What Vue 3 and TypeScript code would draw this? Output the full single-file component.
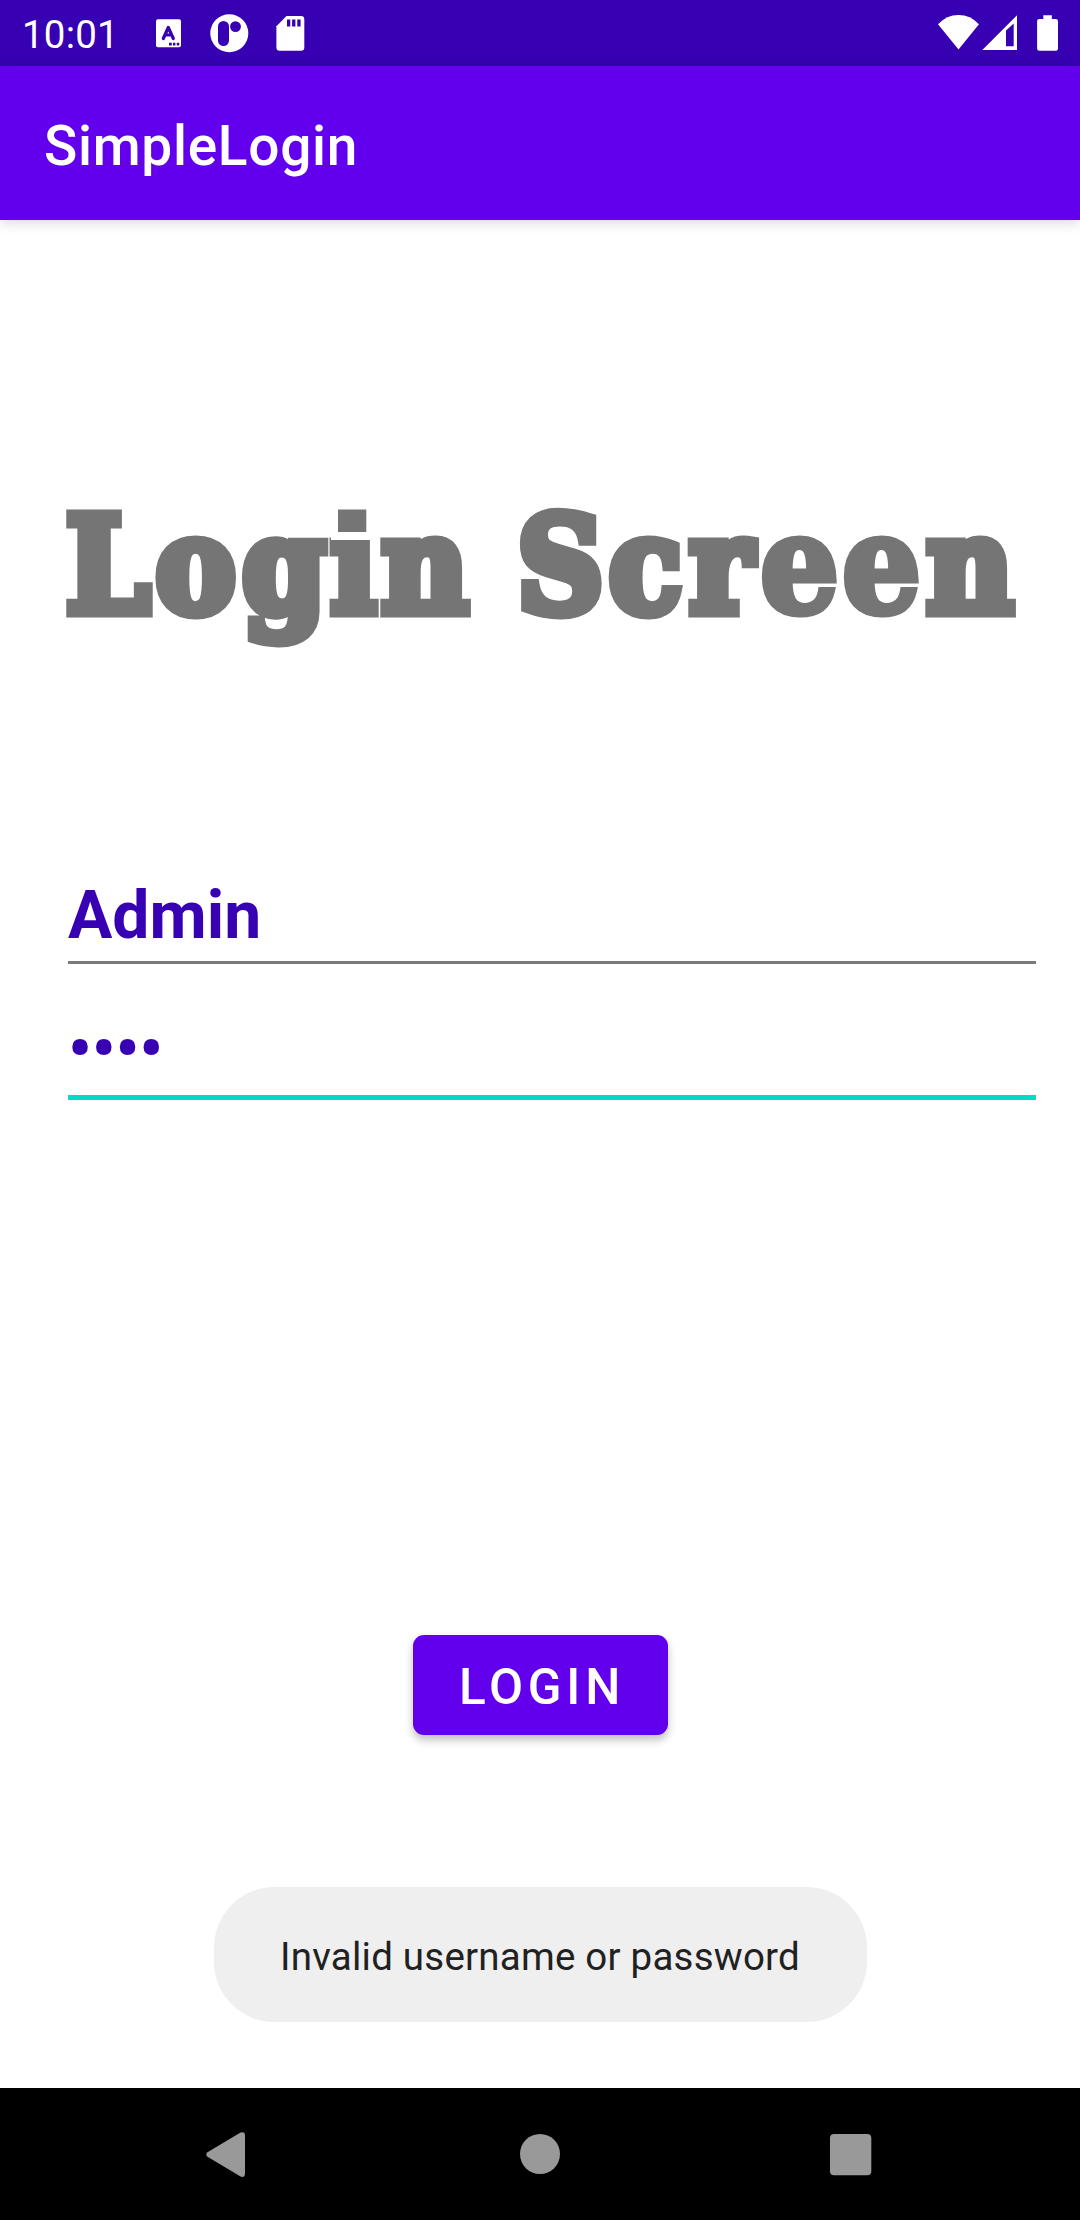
<script setup lang="ts">
import { ref } from 'vue'

const username = ref<string>('Admin')
const password = ref<string>('••••')
const message = ref<string>('Invalid username or password')

// Horizontal centre of each heading glyph
const glyphCentres: string = [108, 195.5, 284, 353.5, 425, 490, 560.5, 645.5, 721, 799.5, 881.5, 970].join(' ')
</script>

<template>
  <div class="screen">
    <header class="status">
      <span class="time">10:01</span>
      <svg class="notifications" width="180" height="66" viewBox="140 0 180 66" fill="#fff">
        <rect x="156" y="19.3" width="25" height="28" rx="2" />
        <path d="M163.300 38.500 168.300 27.500 173.300 38.500M165.200 35H171.500" fill="none" stroke="#3700b3" stroke-width="3.200" stroke-linecap="round" stroke-linejoin="round" />
        <path d="M169 42.7h2.8v2.8H169zM173 42.7h2.4v2.8H173zM176.8 42.7h2.4v2.8h-2.4z" fill="#3700b3" />
        <circle cx="229.3" cy="33.2" r="19" />
        <rect x="218" y="21" width="11" height="25" rx="5.5" fill="#3700b3" />
        <circle cx="235.5" cy="26.6" r="5.4" fill="#3700b3" />
        <path d="M286.5 16H301q3.300 0 3.300 3.300V47.500q0 3.300-3.300 3.300H279.700q-3.300 0-3.300-3.300V26.300z" />
        <path d="M287 19.500h3.300v7H287zM292.100 19.500h3.300v7h-3.300zM297.300 19.500h3.300v7h-3.300z" fill="#3700b3" />
      </svg>
      <svg class="system" width="140" height="66" viewBox="930 0 140 66" fill="#fff">
        <path d="M958.500 49.500 938 24.300Q946.500 15 958.500 15T979 24.300z" />
        <path fill-rule="evenodd" d="M982.300 50 1017 15.300V50zM1006 30.500V46.300h7.700V23.500z" />
        <path d="M1043.300 15.300h8.500V19h4q2.200 0 2.200 2.200v27.300q0 2.200-2.200 2.200h-16.500q-2.200 0-2.200-2.200V21.200q0-2.200 2.200-2.200h4z" />
      </svg>
    </header>

    <div class="appbar">SimpleLogin</div>

    <main class="content">
      <svg class="heading" width="1080" height="200" viewBox="0 480 1080 200" role="heading" aria-level="1">
        <text :x="glyphCentres" y="611.500">Login Scr<tspan class="open">ee</tspan>n</text>
        <!-- square dot of the slab i -->
        <rect x="331" y="498" width="43" height="42" fill="#fff" />
        <rect x="338" y="509.500" width="28.300" height="22.500" fill="#757575" />
      </svg>
      <div class="field name">{{ username }}</div>
      <div class="field pass">{{ password }}</div>
      <button class="login" type="button">LOGIN</button>
      <div class="toast">{{ message }}</div>
    </main>

    <nav class="navbar">
      <svg width="1080" height="132" viewBox="0 2088 1080 132" fill="#999">
        <path d="M207.500 2152.200 240.500 2132.500Q245 2131 245 2135.500V2173.500Q245 2178 240.500 2176.500L207.500 2156.800Q205 2154.500 207.500 2152.200z" />
        <circle cx="540" cy="2154" r="20" />
        <rect x="830" y="2134" width="41.300" height="41.300" rx="4" />
      </svg>
    </nav>
  </div>
</template>

<style>
body {
  margin: 0;
  background: #fff;
}
</style>

<style scoped>
.screen {
  width: 1080px;
  height: 2220px;
  display: flex;
  flex-direction: column;
  overflow: hidden;
  background: #fff;
  font-family: Roboto, "Liberation Sans", sans-serif;
}
svg {
  display: block;
  flex: none;
}
.status {
  height: 66px;
  flex: none;
  display: flex;
  background: #3700b3;
  color: #fff;
}
.time {
  width: 118px;
  padding-left: 22px;
  font-size: 38.5px;
  letter-spacing: 0.200px;
  line-height: 70px;
}
.system {
  margin-left: auto;
  margin-right: 10px;
}
.appbar {
  height: 154px;
  flex: none;
  box-sizing: border-box;
  padding-left: 44px;
  padding-top: 3px;
  background: #6200ee;
  color: #fff;
  font-size: 55px;
  font-weight: 500;
  letter-spacing: 0.700px;
  line-height: 154px;
  box-shadow: 0 3px 12px rgba(0, 0, 0, 0.15);
}
.content {
  flex: 1;
  display: flex;
  flex-direction: column;
  align-items: center;
}
.heading {
  margin-top: 260px;
}
.heading text {
  font-family: "DejaVu Serif Condensed", "DejaVu Serif", serif;
  font-stretch: condensed;
  font-weight: 700;
  font-size: 132px;
  text-anchor: middle;
  fill: #757575;
  stroke: #757575;
  stroke-width: 11px;
  stroke-linejoin: miter;
}
.heading .open {
  font-size: 137px;
  stroke-width: 7px;
}
.field {
  width: 968px;
  margin-left: 24px;
  box-sizing: border-box;
  color: #3700b3;
  font-size: 66px;
  font-weight: 700;
  white-space: nowrap;
}
.name {
  height: 104.400px;
  margin-top: 180px;
  line-height: 112px;
  border-bottom: 3px solid #7a7a7a;
}
.pass {
  height: 135.600px;
  line-height: 170px;
  border-bottom: 5.500px solid #03dac5;
}
.login {
  width: 255px;
  height: 100px;
  margin-top: 535px;
  padding: 5px 0 0 4px;
  border: 0;
  border-radius: 11px;
  background: #6200ee;
  color: #fff;
  font-family: inherit;
  font-size: 49.500px;
  font-weight: 500;
  letter-spacing: 4.800px;
  box-shadow: 0 5px 8px rgba(0, 0, 0, 0.25);
}
.toast {
  width: 653px;
  height: 135px;
  box-sizing: border-box;
  margin-top: 152px;
  padding-top: 2px;
  border-radius: 60.500px;
  background: #efefef;
  color: #212121;
  font-size: 38.500px;
  letter-spacing: 0.220px;
  line-height: 135px;
  text-align: center;
}
.navbar {
  height: 132px;
  flex: none;
  background: #000;
}
</style>
